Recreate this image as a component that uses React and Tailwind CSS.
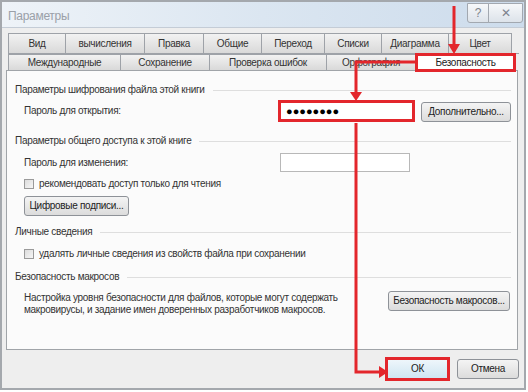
import React from "react";

const row1 = [
  { label: "Вид", w: 58 },
  { label: "вычисления", w: 80 },
  { label: "Правка", w: 60 },
  { label: "Общие", w: 59 },
  { label: "Переход", w: 64 },
  { label: "Списки", w: 58 },
  { label: "Диаграмма", w: 68 },
  { label: "Цвет", w: 64 },
];

const row2 = [
  { label: "Международные", w: 113 },
  { label: "Сохранение", w: 90 },
  { label: "Проверка ошибок", w: 118 },
  { label: "Орфография", w: 90 },
];

function Tab({ label, w }) {
  return (
    <div
      className="h-full flex items-center justify-center border border-[#9ea2a8] border-b-0 -ml-px first:ml-0 bg-gradient-to-b from-[#f2f2f2] to-[#d9d9d9] text-[#333]"
      style={{ width: w }}
    >
      {label}
    </div>
  );
}

function Section({ title }) {
  return (
    <div className="h-[12px] flex items-center gap-2 pl-2 pr-[6px] text-[#333]">
      <span className="whitespace-nowrap">{title}</span>
      <div className="flex-1 h-px bg-[#dedede]" />
    </div>
  );
}

function Btn({ children, className = "" }) {
  return (
    <div
      className={
        "h-[20px] flex items-center justify-center rounded-[3px] border border-[#8e9298] bg-gradient-to-b from-[#f4f4f4] to-[#dcdcdc] text-[#222] " +
        className
      }
    >
      {children}
    </div>
  );
}

function Check({ children }) {
  return (
    <div className="h-[12px] flex items-center gap-[5px] pl-[17px] text-[#333]">
      <div className="w-[10px] h-[10px] border border-[#9a9a9a] bg-gradient-to-br from-[#dcdcdc] to-[#f6f6f6]" />
      <span>{children}</span>
    </div>
  );
}

export default function App() {
  return (
    <div className="w-[528px] h-[392px] relative overflow-hidden bg-white font-['Liberation_Sans',Arial,sans-serif] text-[10px] leading-[12px] tracking-[-0.3px]">
      <div className="w-[526px] h-[390px] border-2 border-[#a4a8ad] bg-[#eeeeee] flex flex-col">
        {/* title bar */}
        <div className="h-[26px] flex items-start bg-gradient-to-r from-[#eef3f8] via-[#dbe6f1] to-[#cddcec] border-b border-[#c4ccd6]">
          <span className="mt-[8px] ml-[6px] text-[12px] text-[#9aa0a8]">Параметры</span>
          <div className="ml-auto mr-[1px] mt-[1px] flex">
            <div className="w-[22px] h-[20px] flex items-center justify-center border border-[#a2a8b0] rounded-bl-[3px] bg-gradient-to-b from-[#f6f8fa] to-[#dde3ea] text-[12px] text-[#7d848d]">
              ?
            </div>
            <div className="w-[35px] h-[20px] -ml-px flex items-center justify-center border border-[#a2a8b0] rounded-br-[3px] bg-gradient-to-b from-[#f6f8fa] to-[#dde3ea] text-[12px] text-[#7d848d]">
              ✕
            </div>
          </div>
        </div>

        {/* tabs */}
        <div className="pl-[6px] pt-[5px]">
          <div className="flex h-[20px]">
            {row1.map((t) => (
              <Tab key={t.label} {...t} />
            ))}
          </div>
          <div className="flex h-[17px] border-t border-[#9ea2a8] w-[511px]">
            {row2.map((t) => (
              <Tab key={t.label} {...t} />
            ))}
            <div className="w-[101px] -ml-px h-[19px] -mt-px flex items-center justify-center border-[3px] border-[#e3262c] bg-white text-[#222] relative z-10">
              Безопасность
            </div>
          </div>
        </div>

        {/* panel */}
        <div className="ml-[4px] w-[512px] h-[280px] border border-[#a0a4a8] bg-[#fbfbfb] flex flex-col">
          <div className="mt-[13px]">
            <Section title="Параметры шифрования файла этой книги" />
          </div>

          <div className="mt-[4px] h-[22px] flex items-center pl-[17px] text-[#333]">
            <span className="w-[254px]">Пароль для открытия:</span>
            <div className="w-[137px] h-[22px] border-[3px] border-[#e3262c] bg-white flex items-center pl-[5px] text-[11px] tracking-[0px] text-black">
              ●●●●●●●●
            </div>
            <Btn className="ml-[6px] w-[90px] mt-[2px]">Дополнительно...</Btn>
          </div>

          <div className="mt-[13px]">
            <Section title="Параметры общего доступа к этой книге" />
          </div>

          <div className="mt-[6px] h-[19px] flex items-center pl-[17px] text-[#333]">
            <span className="w-[256px]">Пароль для изменения:</span>
            <div className="w-[130px] h-[19px] border border-[#b8b8b8] bg-white" />
          </div>

          <div className="mt-[6px]">
            <Check>рекомендовать доступ только для чтения</Check>
          </div>

          <div className="mt-[6px] pl-[17px]">
            <Btn className="w-[105px]">Цифровые подписи...</Btn>
          </div>

          <div className="mt-[10px]">
            <Section title="Личные сведения" />
          </div>

          <div className="mt-[10px]">
            <Check>удалять личные сведения из свойств файла при сохранении</Check>
          </div>

          <div className="mt-[11px]">
            <Section title="Безопасность макросов" />
          </div>

          <div className="mt-[8px] flex items-start pl-[17px] pr-[7px] text-[#333]">
            <div className="flex-1 pt-[1px]">
              Настройка уровня безопасности для файлов, которые могут содержать
              <br />
              макровирусы, и задание имен доверенных разработчиков макросов.
            </div>
            <Btn className="w-[122px]">Безопасность макросов...</Btn>
          </div>
        </div>

        {/* footer */}
        <div className="mt-[7px] flex items-start pl-[383px]">
          <div className="w-[65px] h-[24px] border-[3px] border-[#e3262c] bg-gradient-to-b from-[#eef6fb] to-[#cfe6f2] flex items-center justify-center text-[#222]">
            ОК
          </div>
          <Btn className="ml-[7px] mt-[2px] w-[62px]">Отмена</Btn>
        </div>
      </div>

      {/* red annotation arrows */}
      <svg className="absolute left-0 top-0 pointer-events-none" width="528" height="392" viewBox="0 0 528 392">
        <g fill="none" stroke="#e3262c" strokeWidth="3">
          <path d="M454 6 V46" />
          <path d="M421 62 H356 V94" />
          <path d="M356 123 V372 H380" />
        </g>
        <g fill="#e3262c">
          <polygon points="448,44 460,44 454,54" />
          <polygon points="350,92 362,92 356,101" />
          <polygon points="379,366 379,378 388,372" />
        </g>
      </svg>
    </div>
  );
}
